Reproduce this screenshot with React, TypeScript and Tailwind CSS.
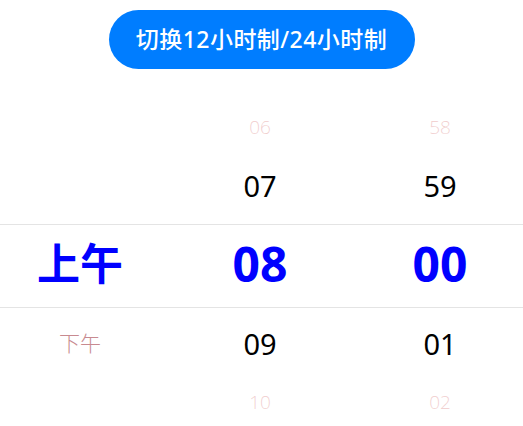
const hours = { top: '06', prev: '07', cur: '08', next: '09', bottom: '10' };
const minutes = { top: '58', prev: '59', cur: '00', next: '01', bottom: '02' };

const font = { fontFamily: '"Noto Sans", "Noto Sans CJK SC", sans-serif' };

const Column = ({ col }: { col: typeof hours }) => (
  <div className="flex flex-col items-center">
    <div className="h-[58px] pb-[3px] flex items-center justify-center text-[19px] font-extralight text-[#f0cccc]">{col.top}</div>
    <div className="h-[58px] pb-[2px] flex items-center justify-center text-[29px] text-black">{col.prev}</div>
    <div className="h-[8px]" />
    <div className="h-[84px] pb-[5px] flex items-center justify-center text-[48px] font-bold text-[#0000ff]">{col.cur}</div>
    <div className="h-[7px]" />
    <div className="h-[58px] flex items-center justify-center text-[29px] text-black">{col.next}</div>
    <div className="h-[58px] flex items-center justify-center text-[19px] font-extralight text-[#f0cccc]">{col.bottom}</div>
  </div>
);

export default function App() {
  return (
    <div className="w-[523px] h-[426px] bg-white overflow-hidden" style={font}>
      <div className="flex justify-center pt-[10px]">
        <button className="w-[306px] h-[59px] rounded-full bg-[#007dff] text-white text-[23px] tracking-[0.02em] font-medium">
          切换12小时制/24小时制
        </button>
      </div>
      <div className="relative mt-[31px]">
        <div className="absolute left-0 right-0 top-[124px] h-[84px] border-y border-[#e4e4e4]" />
        <div className="grid grid-cols-[160px_200px_160px]">
          <div className="flex flex-col items-center">
            <div className="h-[124px]" />
            <div className="h-[84px] pb-[4px] flex items-center justify-center text-[43px] font-bold text-[#0000ff]">上午</div>
            <div className="h-[7px]" />
            <div className="h-[58px] flex items-center justify-center text-[21px] font-extralight text-[#c88a90]">下午</div>
          </div>
          <Column col={hours} />
          <Column col={minutes} />
        </div>
      </div>
    </div>
  );
}
